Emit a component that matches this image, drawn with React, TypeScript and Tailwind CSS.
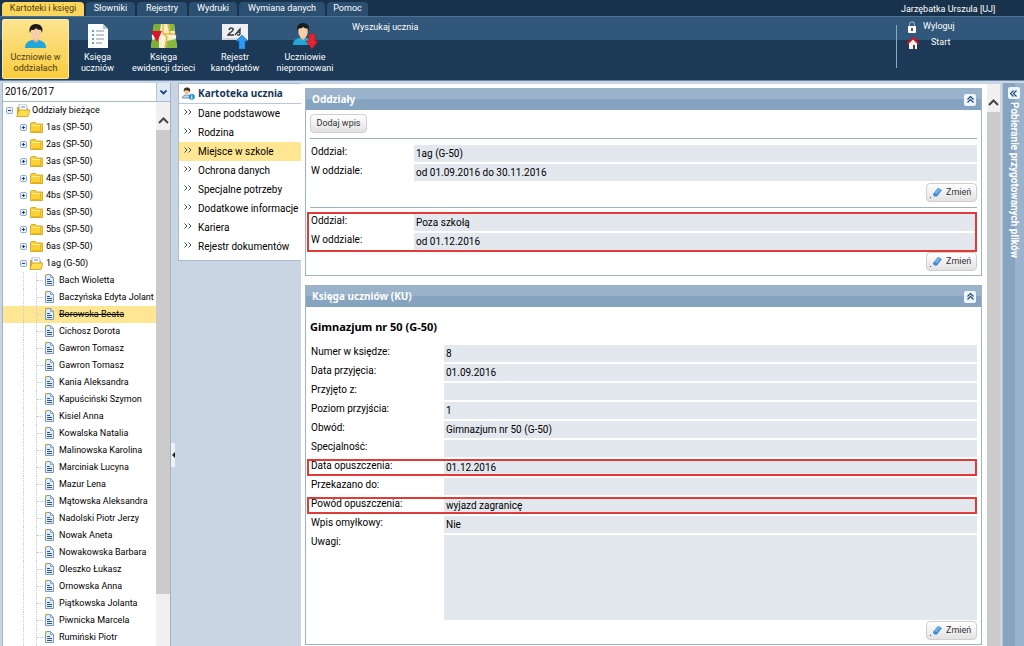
import { useState } from "react";
import type { ReactNode } from "react";

const tabs = [
  { name: "Kartoteki i księgi", width: "w-[82px]" },
  { name: "Słowniki", width: "w-[49px]" },
  { name: "Rejestry", width: "w-[50px]" },
  { name: "Wydruki", width: "w-[48px]" },
  { name: "Wymiana danych", width: "w-[86px]" },
  { name: "Pomoc", width: "w-[41px]" },
];

const classes = ["1as", "2as", "3as", "4as", "4bs", "5as", "5bs", "6as"];

const pupils = [
  "Bach Wioletta",
  "Baczyńska Edyta Jolant",
  "Borowska Beata",
  "Cichosz Dorota",
  "Gawron Tomasz",
  "Gawron Tomasz",
  "Kania Aleksandra",
  "Kapuściński Szymon",
  "Kisiel Anna",
  "Kowalska Natalia",
  "Malinowska Karolina",
  "Marciniak Lucyna",
  "Mazur Lena",
  "Mątowska Aleksandra",
  "Nadolski Piotr Jerzy",
  "Nowak Aneta",
  "Nowakowska Barbara",
  "Oleszko Łukasz",
  "Ornowska Anna",
  "Piątkowska Jolanta",
  "Piwnicka Marcela",
  "Rumiński Piotr",
];

const menu = [
  "Dane podstawowe",
  "Rodzina",
  "Miejsce w szkole",
  "Ochrona danych",
  "Specjalne potrzeby",
  "Dodatkowe informacje",
  "Kariera",
  "Rejestr dokumentów",
];

const register = [
  { label: "Numer w księdze:", value: "8" },
  { label: "Data przyjęcia:", value: "01.09.2016" },
  { label: "Przyjęto z:", value: "" },
  { label: "Poziom przyjścia:", value: "1" },
  { label: "Obwód:", value: "Gimnazjum nr 50 (G-50)" },
  { label: "Specjalność:", value: "" },
  { label: "Data opuszczenia:", value: "01.12.2016", marked: true },
  { label: "Przekazano do:", value: "" },
  { label: "Powód opuszczenia:", value: "wyjazd zagranicę", marked: true },
  { label: "Wpis omyłkowy:", value: "Nie" },
  { label: "Uwagi:", value: "", tall: true },
];

/* ---------- icons ---------- */

function PersonShape() {
  return (
    <>
      <path d="M1 24c0-5 3-7 7-8h7c4 1 7 3 7 8z" fill="#22a7d8" />
      <path d="M9 14h6v2l-3 3-3-3z" fill="#e9b184" />
      <path d="M7 6c0-4 10-4 10 0v4c0 3-2 6-5 6s-5-3-5-6z" fill="#f6cfa6" />
      <path d="M6 9C4 3 8 0 12 0s8 3 6 9l-1-3c-3 0-4-1-5-2-1 2-3 2-5 2z" fill="#1b1a1c" />
    </>
  );
}

function PersonIcon() {
  return (
    <svg className="h-6 w-6" viewBox="0 0 24 24">
      <PersonShape />
    </svg>
  );
}

function PersonDownIcon() {
  return (
    <svg className="h-[26px] w-[26px]" viewBox="0 0 26 26">
      <g transform="scale(.92)">
        <PersonShape />
      </g>
      <path d="M17 11h6v7h3l-6 8-6-8h3z" fill="#e3262e" stroke="#a8141b" strokeWidth=".6" />
    </svg>
  );
}

function ListIcon() {
  return (
    <svg className="h-6 w-[22px]" viewBox="0 0 22 24">
      <path d="M1 0h15l5 5v19H1z" fill="#fafcfd" />
      <path d="M16 0v5h5z" fill="#b8c6d2" />
      <path d="M5 7h2M5 11h2M5 15h2M5 19h2" stroke="#2b86d0" strokeWidth="1.6" />
      <path d="M9 7h8M9 11h8M9 15h8M9 19h6" stroke="#8b979f" strokeWidth="1" />
    </svg>
  );
}

function MapIcon() {
  return (
    <svg className="h-6 w-[26px]" viewBox="0 0 26 24">
      <path d="M3 0h20l3 24H0z" fill="#f5edc9" />
      <path d="M3 0h7l-1 7H2zM1 16l7-2v10H0z" fill="#7fae35" />
      <path d="M18 0h5l1 7h-5zM16 17l9-2 1 9H15z" fill="#89b83e" />
      <path d="M12 0v24M1 13l11-3 13 3" fill="none" stroke="#f7f4e4" strokeWidth="3" />
      <path d="M12 0v10l4 3-2 11M12 10h12M17 0l2 10" fill="none" stroke="#eab32d" strokeWidth="1.4" />
      <path d="M0 7h11L6 18z" fill="#d9152b" />
    </svg>
  );
}

function CandidatesIcon() {
  return (
    <svg className="h-[26px] w-[26px]" viewBox="0 0 26 26">
      <path d="M0 1h26v16H0z" fill="#eef1f4" />
      <path d="M1 16h24" stroke="#aebac5" />
      <path d="M7 7c1-3 5-2 4 0s-4 3-5 5h6" fill="none" stroke="#303438" strokeWidth="1.5" />
      <path d="M13 12l5-6v3M14 11c1-3 5-2 4 0s-3 1-2 0" fill="none" stroke="#303438" strokeWidth="1.3" />
      <path d="M20 12l6 6h-3v8h-6v-8h-3z" fill="#2f9bf0" stroke="#1674c4" strokeWidth=".6" />
    </svg>
  );
}

function LockIcon() {
  return (
    <svg className="h-3 w-[10px]" viewBox="0 0 10 12">
      <path d="M2.500 6V3.500c0-3.500 5-3.500 5 0V6" fill="none" stroke="#8fa3b3" strokeWidth="1.200" />
      <rect x="1" y="5" width="8" height="7" rx="1" fill="#fff" />
      <path d="M5 7v3" stroke="#222" strokeWidth="1.500" />
    </svg>
  );
}

function HomeIcon() {
  return (
    <svg className="h-3 w-3" viewBox="0 0 12 12">
      <path d="M2 6l4-4 4 4v6H2z" fill="#f8f2ea" />
      <path d="M0 7l6-6 6 6" fill="none" stroke="#d0142b" strokeWidth="1.800" />
      <path d="M9 1v3" stroke="#d0142b" strokeWidth="1.500" />
      <path d="M6 8h2v4H6z" fill="#41474d" />
    </svg>
  );
}

function ExpanderIcon({ open }: { open?: boolean }) {
  return (
    <svg className="h-[7px] w-[7px] shrink-0" viewBox="0 0 7 7">
      <rect x=".5" y=".5" width="6" height="6" rx="1" fill="#e6eff9" stroke="#8fa9c9" />
      <path d={open ? "M2 3.500h3" : "M2 3.500h3M3.500 2v3"} stroke="#1d3f88" strokeWidth="1" />
    </svg>
  );
}

function FolderIcon({ open }: { open?: boolean }) {
  if (open) {
    return (
      <svg className="h-[13px] w-[14px]" viewBox="0 0 14 13">
        <path d="M1 12V3h4l1 1h6v8z" fill="#e0a80f" />
        <path d="M3 0h6l2 2v5H3z" fill="#f4f8fc" stroke="#92aac2" strokeWidth=".7" />
        <path d="M5 3h4" stroke="#6e93bb" />
        <path d="M3 6h11l-2 6.500H.700z" fill="#ffdc50" stroke="#c79207" strokeWidth=".7" />
      </svg>
    );
  }
  return (
    <svg className="h-[11px] w-[13px]" viewBox="0 0 13 11">
      <path d="M.5 10V1.500L1.500.500h4l1 1.500h6v8.500h-12z" fill="#fbd235" stroke="#d19d10" strokeWidth=".8" />
      <path d="M2 3.500h9.500" stroke="#fff0a0" />
      <path d="M10.500 3v6.500H2" fill="none" stroke="#e8b41c" />
    </svg>
  );
}

function PageIcon() {
  return (
    <svg className="h-3 w-[9px] shrink-0" viewBox="0 0 9 12">
      <path d="M.5.5h5l3 3v8h-8z" fill="#e3edf8" stroke="#7c9abb" />
      <path d="M5.500.500v3h3" fill="none" stroke="#7c9abb" strokeWidth=".8" />
      <path d="M2 5.500h3M2 7.500h5M2 9.500h5" stroke="#2d5683" />
      <path d="M0 0h2v2H0z" fill="#d9c33c" />
    </svg>
  );
}

function CardIcon() {
  return (
    <svg className="h-[13px] w-[13px] shrink-0" viewBox="0 0 13 13">
      <path d="M.5 11c0-2 1.500-3 4-3s4 1 4 3z" fill="#c9dbe8" stroke="#587a94" strokeWidth=".8" />
      <circle cx="5" cy="4.500" r="2.800" fill="#f3c999" />
      <path d="M2 5C1 2 3 .6 5 .6s4 1.400 3 4.400C7 3 5 4 3 3z" fill="#3c3222" />
      <circle cx="9.800" cy="9.800" r="3" fill="#1f93cf" />
      <path d="M9.800 9v3M9.800 7.500v1" stroke="#fff" strokeWidth="1" />
    </svg>
  );
}

function ArrowUpIcon() {
  return (
    <svg className="h-[7px] w-[11px]" viewBox="0 0 11 7">
      <path d="M1 6l4.500-4.500L10 6" fill="none" stroke="#454545" strokeWidth="2" />
    </svg>
  );
}

function DoubleChevron({ left }: { left?: boolean }) {
  return (
    <svg className="h-[7px] w-[7px]" viewBox="0 0 7 7">
      <path
        d={left ? "M3.500.500l-3 3 3 3M6.500.500l-3 3 3 3" : "M.5 3.500l3-3 3 3M.5 6.500l3-3 3 3"}
        fill="none"
        stroke="#1e4a78"
        strokeWidth="1.200"
      />
    </svg>
  );
}

/* ---------- building blocks ---------- */

function RibbonButton({ width, icon, children }: { width: string; icon: ReactNode; children: ReactNode }) {
  return (
    <button className={`${width} flex flex-col items-center text-[9px] leading-[11px] text-white`}>
      <span className="flex h-8 items-center">{icon}</span>
      {children}
    </button>
  );
}

function EditButton() {
  return (
    <div className="flex justify-end">
      <button className="flex h-[19px] w-[51px] items-center gap-1 rounded-sm border border-[#cfcfcf] bg-linear-to-b from-white to-[#e2e2e2] pl-[3px] text-[9px] text-[#333]">
        <svg className="h-3 w-3 shrink-0" viewBox="0 0 12 12">
          <path d="M3 7l5-6 4 2-5 6.500H4z" fill="#3d86cc" />
          <path d="M4 6l4-5 3 1.500-4 5z" fill="#6face6" />
          <path d="M0 10h1v1H0z" fill="#3a4a78" />
        </svg>
        Zmień
      </button>
    </div>
  );
}

type FieldProps = { label: string; value: string; wide?: boolean; marked?: boolean; tall?: boolean };

function Field({ label, value, wide, marked, tall }: FieldProps) {
  return (
    <div
      className={`flex pl-1 ${tall ? "h-[85px]" : "h-[17px]"} ${
        marked ? "outline-2 -outline-offset-2 outline-[#e23a36]" : ""
      }`}
    >
      <dt className={`${wide ? "w-[133px]" : "w-[103px]"} shrink-0 leading-[13px]`}>{label}</dt>
      <dd className="flex-1 bg-[#e2e8ee] pl-0.5 leading-[17px]">{value}</dd>
    </div>
  );
}

function Panel({ title, children }: { title: string; children: ReactNode }) {
  const [open, setOpen] = useState(true);

  return (
    <section className="border border-[#9db3c9] bg-white">
      <header className="flex h-[21px] items-center justify-between bg-linear-to-b from-[#9ab3cb] from-50% to-[#86a3c0] to-50% pr-[5px] pl-[6px]">
        <h2 className="font-['Noto_Sans',sans-serif] text-[10px] font-bold text-white">{title}</h2>
        <button
          onClick={() => setOpen(!open)}
          aria-label={title}
          className="flex h-3 w-3 items-center justify-center rounded-xs bg-[#eef5fc]"
        >
          <DoubleChevron />
        </button>
      </header>
      {open && <div className="pr-1 pb-1 pl-px">{children}</div>}
    </section>
  );
}

function Header() {
  return (
    <header className="shrink-0 bg-[#18324c] text-[9px] text-white">
      <div className="flex h-4 items-end justify-between">
        <nav className="flex gap-0.5 pl-0.5">
          {tabs.map((tab, i) => (
            <a
              key={tab.name}
              href="#"
              className={`${tab.width} flex h-[14px] items-center justify-center rounded-t-sm whitespace-nowrap ${
                i === 0 ? "bg-[#fbd65c] text-[#4a3c10]" : "bg-[#2b4f70]"
              }`}
            >
              {tab.name}
            </a>
          ))}
        </nav>
        <span className="w-[123px] leading-[14px] whitespace-nowrap">Jarzębatka Urszula [UJ]</span>
      </div>
      <div className="flex h-[65px] border-t border-b border-t-[#4d7393] border-b-[#6c87a8] bg-linear-to-b from-[#31577a] from-37% to-[#1c3a57] to-37% pt-0.5 pl-0.5">
        <button className="flex h-[60px] w-[67px] flex-col items-center rounded-xs border border-[#ffeaa0] bg-linear-to-b from-[#fde58f] via-[#fbd768] to-[#f9cd3c] leading-[11px] text-[#4a3c10]">
          <span className="flex h-8 items-center">
            <PersonIcon />
          </span>
          <span>Uczniowie w</span>
          <span>oddziałach</span>
        </button>
        <div className="flex pt-px pl-px">
          <RibbonButton width="w-[55px]" icon={<ListIcon />}>
            <span>Księga</span>
            <span>uczniów</span>
          </RibbonButton>
          <RibbonButton width="w-[77px]" icon={<MapIcon />}>
            <span>Księga</span>
            <span>ewidencji dzieci</span>
          </RibbonButton>
          <RibbonButton width="w-[66px]" icon={<CandidatesIcon />}>
            <span>Rejestr</span>
            <span>kandydatów</span>
          </RibbonButton>
          <RibbonButton width="w-[74px]" icon={<PersonDownIcon />}>
            <span>Uczniowie</span>
            <span>niepromowani</span>
          </RibbonButton>
        </div>
        <a href="#" className="pl-[10px] leading-4">
          Wyszukaj ucznia
        </a>
        <div className="mt-1.5 ml-auto h-[43px] w-px bg-[#8aa9c2]" />
        <div className="w-[127px] pl-2.5">
          <a href="#" className="flex h-4 items-center gap-1.5">
            <LockIcon />
            Wyloguj
          </a>
          <a href="#" className="flex h-4 items-center gap-3">
            <HomeIcon />
            Start
          </a>
        </div>
      </div>
    </header>
  );
}

function Tree() {
  const [selected, setSelected] = useState(2);

  return (
    <div className="flex min-h-0 flex-1">
      <ul className="min-w-0 flex-1 overflow-hidden text-[9px] leading-[17px] whitespace-nowrap">
        <li className="flex h-[17px] items-center pl-[3px]">
          <ExpanderIcon open />
          <span className="flex w-[17px] justify-end">
            <FolderIcon open />
          </span>
          <span className="pl-[2px]">Oddziały bieżące</span>
        </li>
        {classes.map((name) => (
          <li key={name} className="flex h-[17px] items-center pl-[17px]">
            <ExpanderIcon />
            <span className="flex w-4 justify-end">
              <FolderIcon />
            </span>
            <span className="pl-[3px]">{name} (SP-50)</span>
          </li>
        ))}
        <li className="flex h-[17px] items-center pl-[17px]">
          <ExpanderIcon open />
          <span className="flex w-4 justify-end">
            <FolderIcon open />
          </span>
          <span className="pl-[3px]">1ag (G-50)</span>
        </li>
        {pupils.map((name, i) => (
          <li key={i} className={`flex h-[17px] pl-5 ${i === selected ? "bg-[#ffe693]" : ""}`}>
            <span className="w-[13px] shrink-0 border-l border-dotted border-[#c3ced9]" />
            <span className="flex w-[9px] shrink-0 items-center border-l border-dotted border-[#c3ced9]">
              <span className="w-1.5 border-t border-dotted border-[#c3ced9]" />
            </span>
            <button onClick={() => setSelected(i)} className="flex h-4 shrink-0 items-center gap-[5px] text-left">
              <PageIcon />
              <span className={i === 2 ? "line-through" : ""}>{name}</span>
            </button>
          </li>
        ))}
      </ul>
      <div className="flex w-[14px] shrink-0 flex-col bg-[#f0f0f0]">
        <div className="flex h-7 items-center justify-center pt-2">
          <ArrowUpIcon />
        </div>
        <div className="h-[464px] bg-[#cbcbcb]" />
      </div>
    </div>
  );
}

export default function App() {
  const [page, setPage] = useState("Miejsce w szkole");

  return (
    <div className="flex h-screen flex-col overflow-hidden bg-[#cad5e3] font-[Roboto,sans-serif] text-black">
      <Header />
      <div className="flex min-h-0 flex-1">
        <aside className="mt-0.5 ml-0.5 flex w-[169px] shrink-0 flex-col border-x border-[#9fb4cb] bg-white">
          <div className="relative h-[19px] shrink-0 border-b border-[#a8bbd0]">
            <select
              aria-label="Rok szkolny"
              className="block h-[18px] w-full appearance-none pl-0.5 text-[10px] leading-[18px]"
            >
              <option>2016/2017</option>
            </select>
            <span className="pointer-events-none absolute top-0 right-0 flex h-[18px] w-[14px] items-center justify-center border-l border-[#b5c5d6] bg-[#dfe9f4]">
              <svg className="h-[5px] w-[7px]" viewBox="0 0 7 5">
                <path d="M.5.500l3 3 3-3" fill="none" stroke="#1d3f78" strokeWidth="1.800" />
              </svg>
            </span>
          </div>
          <Tree />
        </aside>

        <div className="flex w-[7px] shrink-0 items-center pt-[183px]">
          <button aria-label="Zwiń" className="flex h-6 w-1 items-center justify-center bg-[#eef2f7]">
            <svg className="h-[6px] w-[3px]" viewBox="0 0 3 6">
              <path d="M3 0v6L0 3z" fill="#222" />
            </svg>
          </button>
        </div>

        <nav className="mt-0.5 w-[123px] shrink-0 self-start border border-r-0 border-[#a8bbd0] bg-white pb-1 text-[10px]">
          <h1 className="flex h-5 items-center gap-[3px] border-b border-[#b9c8d8] pl-[3px] font-['Noto_Sans',sans-serif] font-bold whitespace-nowrap text-[#17375a]">
            <CardIcon />
            Kartoteka ucznia
          </h1>
          <ul>
            {menu.map((name) => (
              <li key={name}>
                <button
                  onClick={() => setPage(name)}
                  className={`flex h-[19px] w-full pl-[5px] text-left leading-5 whitespace-nowrap ${
                    page === name ? "bg-[#ffe693]" : ""
                  }`}
                >
                  <span className="flex w-[14px] shrink-0 pt-[5px]">
                    <svg className="h-[6px] w-2" viewBox="0 0 8 6">
                      <path d="M.500.500L3 3 .500 5.500M4.500.500L7 3 4.500 5.500" fill="none" stroke="#2c4f74" />
                    </svg>
                  </span>
                  {name}
                </button>
              </li>
            ))}
          </ul>
        </nav>

        <main className="mt-[3px] flex min-w-0 flex-1 bg-white">
          <div className="flex min-w-0 flex-1 flex-col gap-[9px] overflow-hidden pt-1 pr-[5px] pl-1 text-[10px]">
            <Panel title="Oddziały">
              <div className="pt-1 pl-[3px]">
                <button className="block h-[19px] w-[57px] rounded-sm border border-[#cfcfcf] bg-linear-to-b from-white to-[#e2e2e2] text-[9px] leading-[17px] whitespace-nowrap text-[#333]">
                  Dodaj wpis
                </button>
              </div>
              <hr className="mt-[5px] mb-1.5 ml-[3px] border-[#9fb0bf]" />
              <dl className="flex flex-col gap-0.5 pb-0.5">
                <Field label="Oddział:" value="1ag (G-50)" />
                <Field label="W oddziale:" value="od 01.09.2016 do 30.11.2016" />
              </dl>
              <EditButton />
              <hr className="mt-[5px] mb-1 ml-[3px] border-[#9fb0bf]" />
              <dl className="flex flex-col gap-0.5 py-0.5 pr-px outline-2 -outline-offset-2 outline-[#e23a36]">
                <Field label="Oddział:" value="Poza szkołą" />
                <Field label="W oddziale:" value="od 01.12.2016" />
              </dl>
              <EditButton />
            </Panel>

            <Panel title="Księga uczniów (KU)">
              <h3 className="pt-2.5 pb-[9px] pl-[3px] font-['Noto_Sans',sans-serif] text-[11px] leading-[19px] font-bold">
                Gimnazjum nr 50 (G-50)
              </h3>
              <dl className="flex flex-col gap-0.5 pb-px">
                {register.map((field) => (
                  <Field key={field.label} wide {...field} />
                ))}
              </dl>
              <EditButton />
            </Panel>
          </div>
          <div className="flex w-[13px] shrink-0 flex-col bg-[#f0f0f0]">
            <div className="flex h-7 items-center justify-center pt-2">
              <ArrowUpIcon />
            </div>
            <div className="flex-1 bg-[#cbcbcb]" />
          </div>
        </main>

        <aside className="mt-0.5 ml-0.5 flex w-[22px] shrink-0 flex-col items-center gap-[3px] border-l border-[#b7c8da] bg-linear-to-r from-[#86a3c0] from-55% to-[#9ab3cc] to-55% pt-1">
          <button aria-label="Rozwiń" className="flex h-3 w-3 items-center justify-center rounded-xs bg-[#eef5fc]">
            <DoubleChevron left />
          </button>
          <span className="text-[10px] leading-3 font-bold whitespace-nowrap text-white [writing-mode:vertical-rl]">
            Pobieranie przygotowanych plików
          </span>
        </aside>
      </div>
    </div>
  );
}
